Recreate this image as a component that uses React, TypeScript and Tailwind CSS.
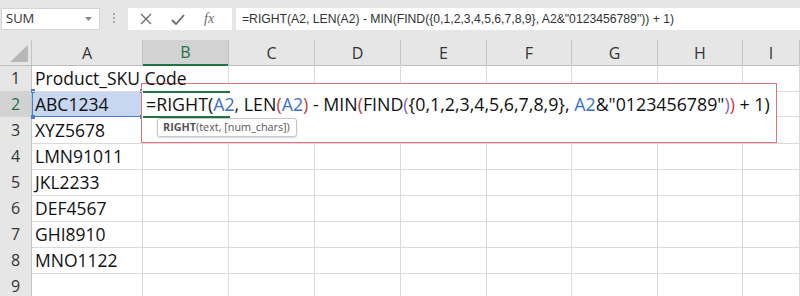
import React from "react";

const cols = ["A", "B", "C", "D", "E", "F", "G", "H", "I"];
const rows = [
  "Product_SKU Code",
  "ABC1234",
  "XYZ5678",
  "LMN91011",
  "JKL2233",
  "DEF4567",
  "GHI8910",
  "MNO1122",
  "",
];

const blue = "text-[#3b72c9]";
const red = "text-[#c23b3b]";
const purple = "text-[#8a63c4]";

const Toolbar = () => (
  <div className="h-[40px] bg-[#e6e6e6] flex items-start pt-[8px] pl-[1px] shrink-0">
    {/* Name box */}
    <div className="w-[99px] h-[22px] bg-white border border-[#d4d4d4] flex items-center justify-between pl-[4px] pr-[7px]">
      <span className="text-[13px] text-[#333]" style={{ fontFamily: "'Open Sans', sans-serif" }}>
        SUM
      </span>
      <svg width="7" height="4" viewBox="0 0 7 4">
        <path d="M0 0h7L3.5 4z" fill="#8a8a8a" />
      </svg>
    </div>
    {/* dotted separator */}
    <div className="ml-[13px] mt-[5px] flex flex-col gap-[2px]">
      <span className="w-[2px] h-[2px] bg-[#a8a8a8]" />
      <span className="w-[2px] h-[2px] bg-[#a8a8a8]" />
      <span className="w-[2px] h-[2px] bg-[#a8a8a8]" />
    </div>
    {/* cancel / enter / fx */}
    <div className="ml-[13px] w-[104px] h-[22px] bg-white flex items-center pl-[12px] gap-[19px]">
      <svg width="12" height="12" viewBox="0 0 12 12">
        <path d="M1 1l10 10M11 1L1 11" stroke="#6a6a6a" strokeWidth="1.3" />
      </svg>
      <svg width="14" height="11" viewBox="0 0 14 11">
        <path d="M1 6l4 4 8-9" stroke="#6a6a6a" strokeWidth="1.8" fill="none" />
      </svg>
      <span
        className="text-[14px] text-[#6a6a6a] italic leading-none"
        style={{ fontFamily: "'Liberation Serif', serif" }}
      >
        fx
      </span>
    </div>
    {/* formula input */}
    <div className="ml-[4px] flex-1 h-[22px] bg-white flex items-center pl-[6px]">
      <span
        className="text-[12.2px] text-[#333] whitespace-nowrap"
        style={{ fontFamily: "'Liberation Sans', sans-serif" }}
      >
        =RIGHT(A2, LEN(A2) - MIN(FIND({"{"}0,1,2,3,4,5,6,7,8,9{"}"}, A2&amp;"0123456789")) + 1)
      </span>
    </div>
  </div>
);

const HeaderRow = () => (
  <div className="grid grid-cols-[32px_111px_86px_86px_86px_86px_85px_86px_85px_57px] h-[25px] bg-[#e6e6e6] shrink-0">
    <div className="relative border-r border-[#c4c4c4] border-b border-b-[#bdbdbd]">
      <svg className="absolute left-[10px] top-[5px]" width="18" height="17" viewBox="0 0 18 17">
        <path d="M18 0V17H0z" fill="#b7b7b7" />
      </svg>
    </div>
    {cols.map((c) => (
      <div
        key={c}
        className={
          c === "B"
            ? "flex items-center justify-center bg-[#d2d2d2] border-r border-[#c4c4c4] border-b-2 border-b-[#217346] text-[#217346] text-[16px]"
            : "flex items-center justify-center border-r border-[#c4c4c4] border-b border-b-[#bdbdbd] text-[#333] text-[16px]"
        }
      >
        {c}
      </div>
    ))}
  </div>
);

const App = () => {
  return (
    <div
      className="relative w-[800px] h-[296px] overflow-hidden bg-white flex flex-col"
      style={{ fontFamily: "'Open Sans', sans-serif" }}
    >
      <Toolbar />
      <HeaderRow />

      {rows.map((val, i) => {
        const n = i + 1;
        return (
          <div
            key={n}
            className="grid grid-cols-[32px_111px_86px_86px_86px_86px_85px_86px_85px_57px] h-[26px] shrink-0"
          >
            <div
              className={
                n === 2
                  ? "flex items-center justify-center bg-[#d2d2d2] border-r border-[#c4c4c4] border-b border-b-[#d4d4d4] text-[#217346] text-[16px]"
                  : "flex items-center justify-center bg-[#e6e6e6] border-r border-[#c4c4c4] border-b border-b-[#d4d4d4] text-[#333] text-[16px]"
              }
            >
              {n}
            </div>
            {cols.map((c) => {
              if (c === "A" && n === 2) {
                return (
                  <div key={c} className="relative bg-[#c6d7ef] flex items-center pl-[3px] text-[17.5px] text-[#111]">
                    {val}
                    <div className="absolute inset-0 border-[1.5px] border-[#4a7bd0]" />
                    <span className="absolute left-[-1px] top-[-2px] w-[4px] h-[4px] bg-[#4a7bd0]" />
                    <span className="absolute right-[-1px] top-[-2px] w-[4px] h-[4px] bg-[#4a7bd0]" />
                    <span className="absolute left-[-1px] bottom-[-2px] w-[4px] h-[4px] bg-[#4a7bd0]" />
                    <span className="absolute right-[-1px] bottom-[-2px] w-[4px] h-[4px] bg-[#4a7bd0]" />
                  </div>
                );
              }
              if (c === "A") {
                return (
                  <div
                    key={c}
                    className={
                      n === 1
                        ? "relative z-10 flex items-center pl-[3px] border-b border-[#dadada] text-[17.5px] text-[#111] whitespace-nowrap"
                        : "flex items-center pl-[3px] border-r border-b border-[#dadada] text-[17.5px] text-[#111] whitespace-nowrap"
                    }
                  >
                    {val}
                  </div>
                );
              }
              return <div key={c} className="border-r border-b border-[#dadada]" />;
            })}
          </div>
        );
      })}

      {/* red annotation box */}
      <div className="absolute left-[141px] top-[83px] w-[636px] h-[60px] border-[1.5px] border-[#e1717b] bg-white" />

      {/* active cell B2 edit borders */}
      <div className="absolute left-[143px] top-[91px] w-[87px] h-[2px] bg-[#217346]" />
      <div className="absolute left-[143px] top-[116px] w-[87px] h-[2px] bg-[#217346]" />

      {/* in-cell formula */}
      <div className="absolute left-[146px] top-[91px] h-[26px] flex items-center whitespace-nowrap text-[17.8px] text-[#111]">
        <span>=RIGHT(</span>
        <span className={blue}>A2</span>
        <span>, LEN</span>
        <span className={red}>(</span>
        <span className={blue}>A2</span>
        <span className={red}>)</span>
        <span>&nbsp;- MIN</span>
        <span className={red}>(</span>
        <span>FIND</span>
        <span className={purple}>(</span>
        <span>{"{0,1,2,3,4,5,6,7,8,9},"}&nbsp;</span>
        <span className={blue}>A2</span>
        <span>&amp;"0123456789"</span>
        <span className={purple}>)</span>
        <span className={red}>)</span>
        <span>&nbsp;+ 1)</span>
      </div>

      {/* function tooltip */}
      <div className="absolute left-[157px] top-[118px] w-[140px] h-[19px] bg-white border border-[#c6c6c6] rounded-[3px] shadow-[0_1px_2px_rgba(0,0,0,0.15)] flex items-center pl-[5px] text-[10.8px] text-[#555] whitespace-nowrap">
        <span className="font-bold">RIGHT</span>
        <span>(text, [num_chars])</span>
      </div>
    </div>
  );
};

export default App;
